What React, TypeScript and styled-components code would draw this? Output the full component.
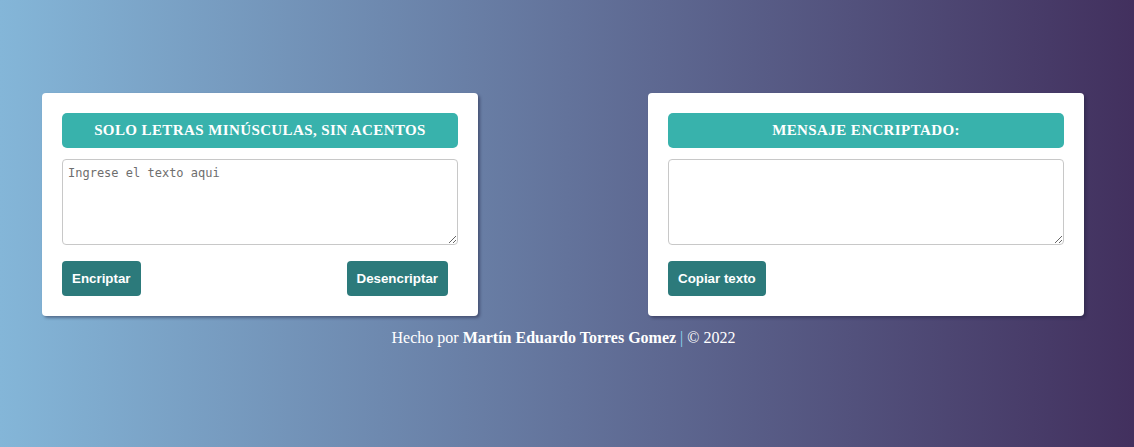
import React from "react";
import styled, { createGlobalStyle } from "styled-components";

const GlobalStyle = createGlobalStyle`
  html, body { margin: 0; padding: 0; }
  body {
    width: 1134px;
    height: 447px;
    overflow: hidden;
    background: linear-gradient(to right, #84b6d8 0%, #42305e 100%);
    font-family: "Liberation Serif", serif;
  }
`;

const Page = styled.main`
  box-sizing: border-box;
  height: 447px;
  padding: 93px 50px 0 42px;
  display: flex;
  flex-direction: column;
`;

const Cards = styled.div`
  display: flex;
  justify-content: space-between;
`;

const Card = styled.section`
  box-sizing: border-box;
  width: 436px;
  height: 223px;
  background: #ffffff;
  border-radius: 4px;
  padding: 20px;
  box-shadow: 2px 2px 3px rgba(30, 30, 60, 0.45);
  display: flex;
  flex-direction: column;
`;

const Heading = styled.h2`
  margin: 0;
  height: 35px;
  background: #38b2ac;
  border-radius: 5px;
  color: #ffffff;
  font-family: "Liberation Serif", serif;
  font-weight: bold;
  font-size: 15px;
  letter-spacing: 0.4px;
  display: flex;
  align-items: center;
  justify-content: center;
  text-transform: uppercase;
`;

const TextArea = styled.textarea`
  box-sizing: border-box;
  margin-top: 11px;
  width: 100%;
  height: 86px;
  border: 1px solid #c8c8c8;
  border-radius: 4px;
  padding: 6px 5px;
  font-family: "DejaVu Sans Mono", monospace;
  font-size: 12px;
  color: #333;
  resize: vertical;
  outline: none;
  &::placeholder { color: #6e6e6e; }
`;

const Actions = styled.div`
  margin-top: 16px;
  display: flex;
  justify-content: space-between;
  padding-right: 10px;
`;

const Button = styled.button`
  height: 35px;
  padding: 0 10px;
  border: none;
  border-radius: 4px;
  background: #2c7a7b;
  color: #ffffff;
  font-family: "Liberation Sans", Arial, sans-serif;
  font-weight: bold;
  font-size: 13.333px;
  cursor: pointer;
`;

const Footer = styled.footer`
  margin-top: 13px;
  text-align: center;
  color: #ffffff;
  font-family: "Liberation Serif", serif;
  font-size: 16px;
  padding-left: 1px;
`;

const Pipe = styled.span`
  color: #8fd8f0;
`;

export default function App() {
  return (
    <>
      <GlobalStyle />
      <Page>
        <Cards>
          <Card>
            <Heading>Solo letras minúsculas, sin acentos</Heading>
            <TextArea placeholder="Ingrese el texto aqui" />
            <Actions>
              <Button>Encriptar</Button>
              <Button>Desencriptar</Button>
            </Actions>
          </Card>
          <Card>
            <Heading>Mensaje encriptado:</Heading>
            <TextArea />
            <Actions>
              <Button>Copiar texto</Button>
            </Actions>
          </Card>
        </Cards>
        <Footer>
          Hecho por <b>Martín Eduardo Torres Gomez</b> <Pipe>|</Pipe> © 2022
        </Footer>
      </Page>
    </>
  );
}
